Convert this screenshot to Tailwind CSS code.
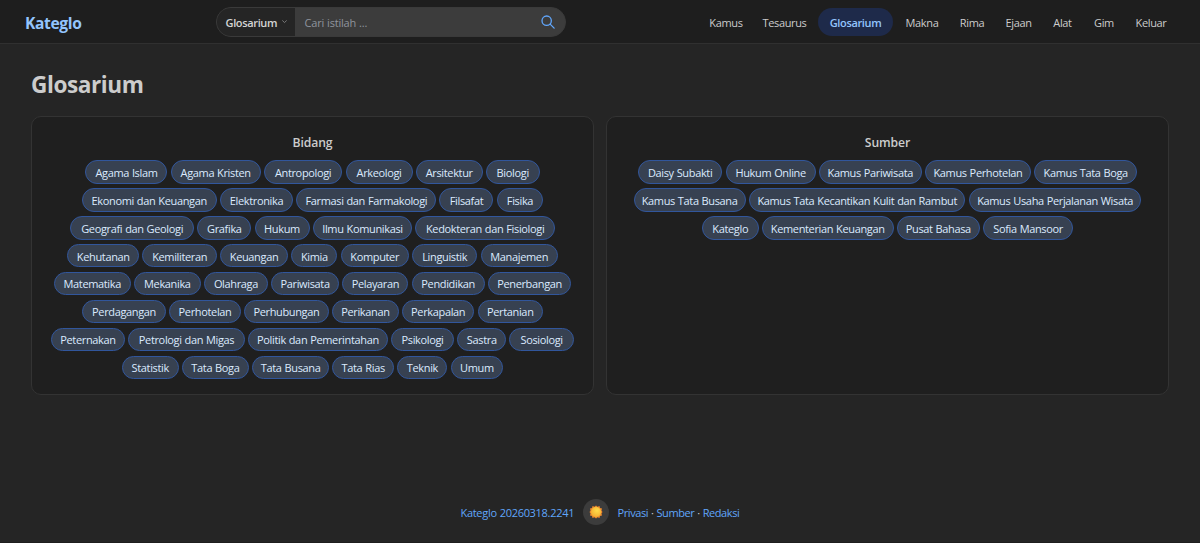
<!DOCTYPE html>
<html lang="id">
<head>
    <meta charset="UTF-8">
    <title>Glosarium - Kateglo</title>
    <meta name="viewport" content="width=device-width, initial-scale=1.0">
    <script src="https://cdn.jsdelivr.net/npm/@tailwindcss/browser@4"></script>
</head>
<body class="h-screen overflow-hidden flex flex-col bg-[#252525] text-[#cccccc] font-['Open_Sans','Noto_Sans',sans-serif] text-[11px] leading-4 tracking-[-0.35px] [word-spacing:0.4px]">

    <!-- Navbar -->
    <header class="h-11 shrink-0 flex items-center bg-[#1e1e1e] border-b border-[#303030] pl-[25px] pr-[23px]">
        <a href="#" class="w-[190.5px] text-[15.6px] leading-6 font-bold text-[#93c5fd] tracking-[-0.35px] pt-0.5">Kateglo</a>

        <form class="w-[350.5px] h-[30px] flex rounded-full border border-[#3a3a3a] bg-[#3c3c3c] overflow-hidden">
            <button type="button" class="w-[78px] flex items-center gap-1 pl-[9px] bg-[#252525] font-semibold text-[#d4d4d4] whitespace-nowrap">
                <span class="w-[51px] pt-0.5">Glosarium</span>
                <svg class="size-[7px] text-[#858585]" viewBox="0 0 8 8" fill="none" stroke="currentColor" stroke-width="1"><path d="M1.500 2.800 4 5.200 6.500 2.800"/></svg>
            </button>
            <div class="flex-1 flex items-center pl-2.5 pt-0.5 text-[#8f949c] tracking-[-0.2px]">Cari istilah ...</div>
            <button type="button" class="w-[35px] flex items-center justify-center text-[#60a5fa]">
                <svg class="size-4" viewBox="0 0 24 24" fill="none" stroke="currentColor" stroke-width="2" stroke-linecap="round"><circle cx="10" cy="10" r="7"/><path d="m15.200 15.200 6 6"/></svg>
            </button>
        </form>

        <nav class="ml-auto flex items-center text-center whitespace-nowrap">
            <a href="#" class="w-[54px] pt-0.5">Kamus</a>
            <a href="#" class="w-[63px] pt-0.5">Tesaurus</a>
            <a href="#" class="w-[75px] mx-0.5 pt-[7px] pb-[5px] rounded-full bg-[#1e2a4a] text-[#93c5fd] font-semibold">Glosarium</a>
            <a href="#" class="w-[54px] pt-0.5">Makna</a>
            <a href="#" class="w-[46px] pt-0.5">Rima</a>
            <a href="#" class="w-[47px] pt-0.5">Ejaan</a>
            <a href="#" class="w-[41px] pt-0.5">Alat</a>
            <a href="#" class="w-[42px] pt-0.5">Gim</a>
            <a href="#" class="w-[52px] pt-0.5">Keluar</a>
        </nav>
    </header>

    <main class="flex-1 px-[31px] pt-[25px]">
        <h1 class="text-[22.6px] leading-8 font-bold tracking-[-0.42px]">Glosarium</h1>

        <div class="mt-[15px] grid grid-cols-2 gap-3">
            <section class="h-[279px] rounded-[10px] border border-[#333333] bg-[#1f1f1f] px-[18px] pt-[17px]">
                <h2 class="text-center text-[12.2px] leading-[18px] font-semibold tracking-[-0.1px]">Bidang</h2>
                <div id="bidang" class="mt-[8.4px] flex flex-wrap justify-center gap-x-[3.2px] gap-y-[4.5px]"></div>
            </section>
            <section class="h-[279px] rounded-[10px] border border-[#333333] bg-[#1f1f1f] px-[18px] pt-[17px]">
                <h2 class="text-center text-[12.2px] leading-[18px] font-semibold tracking-[-0.1px]">Sumber</h2>
                <div id="sumber" class="mt-[8.4px] flex flex-wrap justify-center gap-x-[3.2px] gap-y-[4.5px]"></div>
            </section>
        </div>
    </main>

    <footer class="h-[62px] shrink-0 flex justify-center pt-[18px] border-b border-[#1e1e1e] text-[#60a5fa] whitespace-nowrap">
        <div class="h-[26px] flex items-center">
            <a href="#" class="w-[113px] pt-0.5 tracking-[-0.3px]">Kateglo 20260318.2241</a>
            <button type="button" class="mx-[9px] size-[26px] rounded-full bg-[#3c3c3c] flex items-center justify-center">
                <svg class="size-[14px]" viewBox="0 0 28 28">
                    <defs>
                        <radialGradient id="sun" cx=".6" cy=".35" r=".7"><stop offset="0" stop-color="#ffdc4a"/><stop offset="1" stop-color="#f2ac30"/></radialGradient>
                    </defs>
                    <path fill="#f08a2c" d="m14 1 3 2.500 4-1.500 1 4 4 1-1 4L27 14l-2 3 1 4-4 1-1 4-4-1.500-3 2.500-3-2.500-4 1.500-1-4-4-1 1-4L1 14l2-3-1-4 4-1 1-4 4 1.500z"/>
                    <circle cx="14" cy="14" r="10" fill="url(#sun)"/>
                </svg>
            </button>
            <div class="w-[122px] pt-0.5 tracking-[-0.4px]"><a href="#">Privasi</a> <span class="text-[#cccccc]">·</span> <a href="#">Sumber</a> <span class="text-[#cccccc]">·</span> <a href="#">Redaksi</a></div>
        </div>
    </footer>

    <script>
        // [nama, lebar label]
        const bidang = [
            ['Agama Islam', 82], ['Agama Kristen', 90], ['Antropologi', 78.5], ['Arkeologi', 67], ['Arsitektur', 67], ['Biologi', 53.6],
            ['Ekonomi dan Keuangan', 135], ['Elektronika', 73.2], ['Farmasi dan Farmakologi', 140], ['Filsafat', 54], ['Fisika', 46.6],
            ['Geografi dan Geologi', 124], ['Grafika', 54], ['Hukum', 55], ['Ilmu Komunikasi', 99.6], ['Kedokteran dan Fisiologi', 139.4],
            ['Kehutanan', 72], ['Kemiliteran', 74.4], ['Keuangan', 68], ['Kimia', 46.2], ['Komputer', 68.2], ['Linguistik', 65.4], ['Manajemen', 77.2],
            ['Matematika', 77], ['Mekanika', 66.8], ['Olahraga', 64], ['Pariwisata', 68], ['Pelayaran', 66.2], ['Pendidikan', 73], ['Penerbangan', 83.4],
            ['Perdagangan', 84], ['Perhotelan', 71.6], ['Perhubungan', 84.8], ['Perikanan', 66.8], ['Perkapalan', 72.4], ['Pertanian', 65.4],
            ['Peternakan', 73.8], ['Petrologi dan Migas', 117], ['Politik dan Pemerintahan', 139.4], ['Psikologi', 63.4], ['Sastra', 48.8], ['Sosiologi', 64.6],
            ['Statistik', 57], ['Tata Boga', 67], ['Tata Busana', 77], ['Tata Rias', 61.8], ['Teknik', 50.2], ['Umum', 52.6]
        ];
        const sumber = [
            ['Daisy Subakti', 84.6], ['Hukum Online', 90], ['Kamus Pariwisata', 103], ['Kamus Perhotelan', 106], ['Kamus Tata Boga', 103],
            ['Kamus Tata Busana', 112.2], ['Kamus Tata Kecantikan Kulit dan Rambut', 216.6], ['Kamus Usaha Perjalanan Wisata', 172.8],
            ['Kateglo', 56.8], ['Kementerian Keuangan', 131.8], ['Pusat Bahasa', 83], ['Sofia Mansoor', 90.2]
        ];

        function isiLabel(id, daftar) {
            document.getElementById(id).innerHTML = daftar.map(([nama, lebar]) => `
                <a href="#" style="width:${lebar}px" class="h-[23.4px] pt-[1.6px] flex items-center justify-center rounded-full border border-[#31569c] bg-[#374151] text-[#dbeafe] whitespace-nowrap">${nama}</a>
            `).join('');
        }

        isiLabel('bidang', bidang);
        isiLabel('sumber', sumber);
    </script>
</body>
</html>
